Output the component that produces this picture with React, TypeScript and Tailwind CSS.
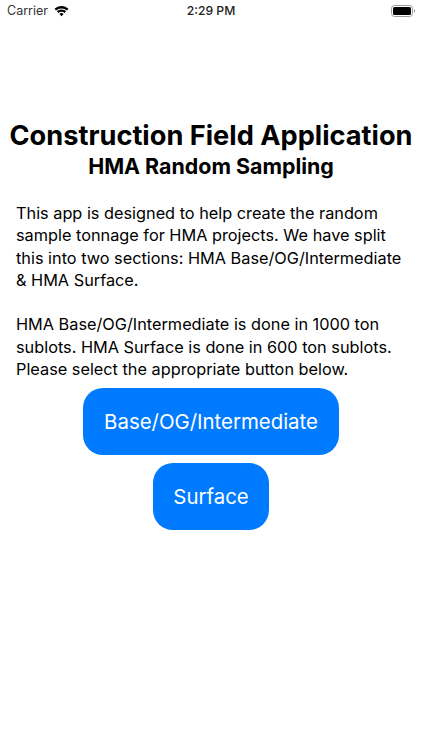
function StatusBar() {
  return (
    <div className="flex h-[22px] items-center pl-[7px] pr-[7px] text-black">
      <div className="flex flex-1 items-center gap-[6px]">
        <span className="text-[12.5px] text-[#333]">Carrier</span>
        <svg width="15" height="11" viewBox="0 0 16 12" fill="black">
          <path d="M8 2.6c2.300 0 4.300.9 5.900 2.300L15.600 3.100C13.600 1.200 10.900 0 8 0S2.400 1.200.4 3.100l1.700 1.800C3.700 3.500 5.700 2.600 8 2.600z" />
          <path d="M8 6.300c1.300 0 2.400.5 3.300 1.300l1.700-1.800C11.700 4.600 9.900 3.800 8 3.800s-3.700.8-5 2l1.700 1.800C5.600 6.800 6.700 6.300 8 6.300z" />
          <path d="M8 7.600c-.9 0-1.700.4-2.300 1L8 11.200l2.300-2.600c-.6-.6-1.400-1-2.300-1z" />
        </svg>
      </div>
      <span className="text-[12.2px] font-medium text-[#222]">2:29 PM</span>
      <div className="flex flex-1 justify-end">
        <svg width="24" height="12" viewBox="0 0 24 12">
          <rect x="0.500" y="0.500" width="21" height="11" rx="3" fill="none" stroke="#999" />
          <rect x="2" y="2" width="18" height="8" rx="1.500" fill="black" />
          <path d="M23 4v4c.6-.2 1-1 1-2s-.4-1.800-1-2z" fill="#999" />
        </svg>
      </div>
    </div>
  );
}

export default function App() {
  return (
    <div className="h-[750px] w-[422px] bg-white font-['Inter','Liberation_Sans',sans-serif] text-black">
      <StatusBar />
      <div className="flex flex-col items-center pt-[98px]">
        <h1 className="whitespace-nowrap text-[27.2px] font-bold leading-[32px]">Construction Field Application</h1>
        <h2 className="whitespace-nowrap text-[21.4px] font-bold leading-[28px]">HMA Random Sampling</h2>
      </div>
      <div className="px-[16px] pt-[22px] text-[16.3px] leading-[22.3px]">
        <p>
          This app is designed to help create the random sample tonnage for HMA projects. We have split
          this into two sections: HMA Base/OG/Intermediate &amp; HMA Surface.
        </p>
        <p className="mt-[22.3px]">
          HMA Base/OG/Intermediate is done in 1000 ton sublots. HMA Surface is done in 600 ton sublots.
          Please select the appropriate button below.
        </p>
      </div>
      <div className="flex flex-col items-center gap-[8px] pt-[8px]">
        <button className="h-[67px] w-[256px] rounded-[20px] bg-[#007aff] text-[20.4px] text-white">
          Base/OG/Intermediate
        </button>
        <button className="h-[67px] w-[116px] rounded-[20px] bg-[#007aff] text-[20.4px] text-white">
          Surface
        </button>
      </div>
    </div>
  );
}
